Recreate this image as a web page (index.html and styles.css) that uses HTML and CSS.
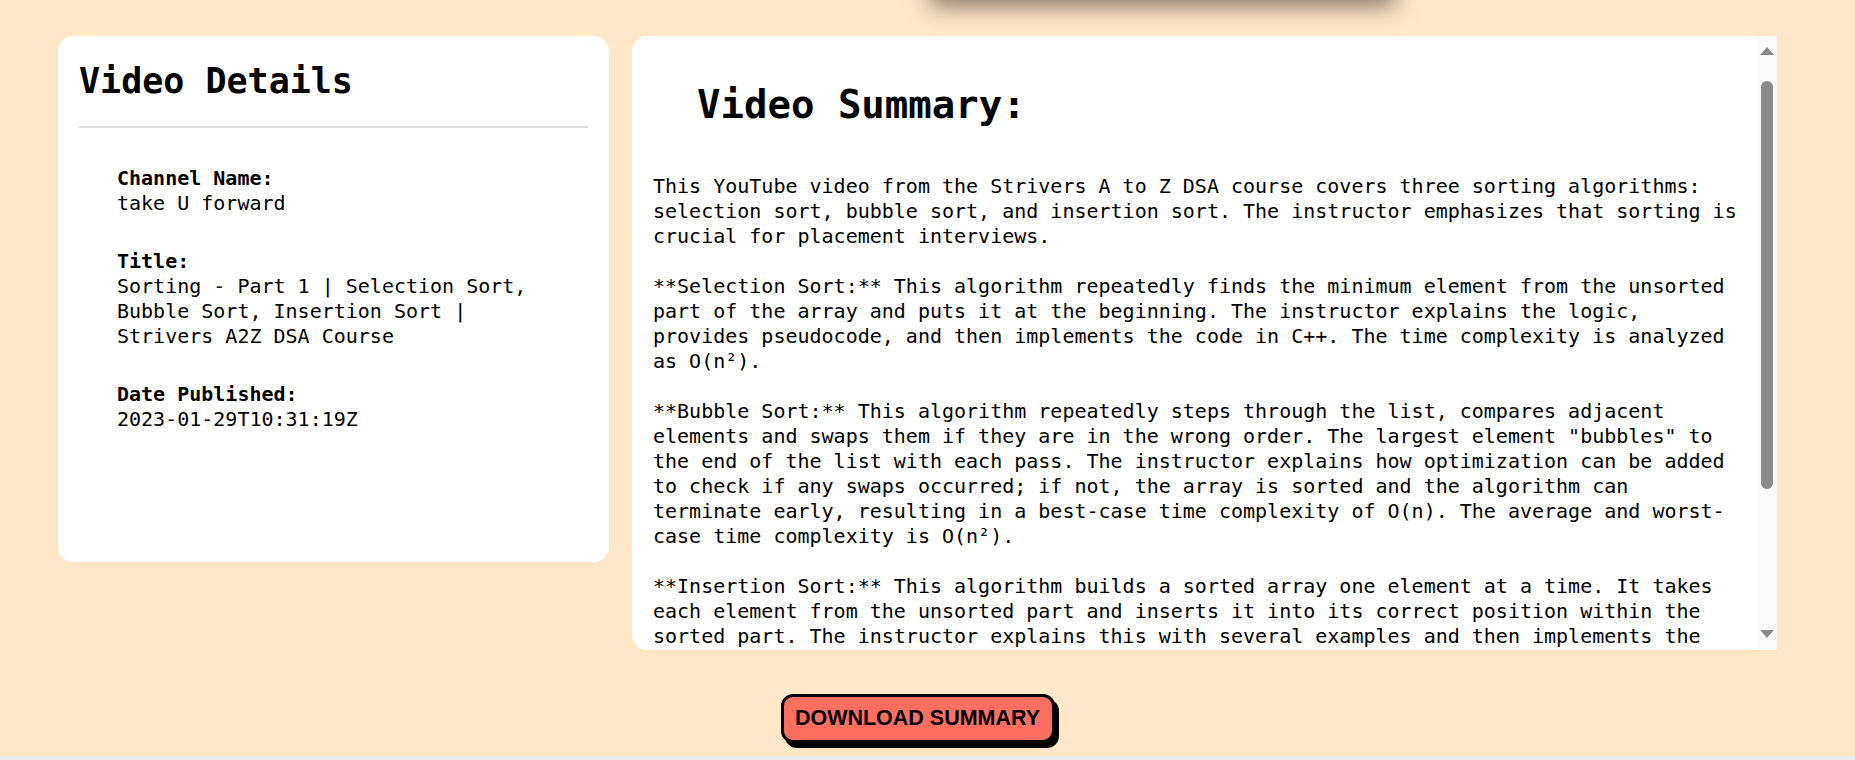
FILE: index.html
```html
<!DOCTYPE html>
<html lang="en">
<head>
<meta charset="utf-8">
<title>Video Summary</title>
<link rel="stylesheet" href="styles.css">
</head>
<body>
<div class="ghost-panel"></div>
<main class="layout">
  <div class="cards">
    <section class="card details-card">
      <h2 class="card-title">Video Details</h2>
      <hr class="divider">
      <div class="details">
        <div class="detail">
          <div class="detail-label">Channel Name:</div>
          <div class="detail-value">take U forward</div>
        </div>
        <div class="detail">
          <div class="detail-label">Title:</div>
          <div class="detail-value">Sorting - Part 1 | Selection Sort, Bubble Sort, Insertion Sort | Strivers A2Z DSA Course</div>
        </div>
        <div class="detail">
          <div class="detail-label">Date Published:</div>
          <div class="detail-value">2023-01-29T10:31:19Z</div>
        </div>
      </div>
    </section>
    <section class="card summary-card">
      <div class="summary-body">
        <h1 class="summary-title">Video Summary:</h1>
        <div class="summary-text">This YouTube video from the Strivers A to Z DSA course covers three sorting algorithms: selection sort, bubble sort, and insertion sort. The instructor emphasizes that sorting is crucial for placement interviews.

**Selection Sort:** This algorithm repeatedly finds the minimum element from the unsorted part of the array and puts it at the beginning. The instructor explains the logic, provides pseudocode, and then implements the code in C++. The time complexity is analyzed as O(n²).

**Bubble Sort:** This algorithm repeatedly steps through the list, compares adjacent elements and swaps them if they are in the wrong order. The largest element "bubbles" to the end of the list with each pass. The instructor explains how optimization can be added to check if any swaps occurred; if not, the array is sorted and the algorithm can terminate early, resulting in a best-case time complexity of O(n). The average and worst-case time complexity is O(n²).

**Insertion Sort:** This algorithm builds a sorted array one element at a time. It takes each element from the unsorted part and inserts it into its correct position within the sorted part. The instructor explains this with several examples and then implements the code in C++. The worst and average case time complexity is O(n²), while the best case is O(n).</div>
      </div>
      <div class="scrollbar" aria-hidden="true">
        <span class="sb-up"></span>
        <span class="sb-thumb"></span>
        <span class="sb-down"></span>
      </div>
    </section>
  </div>
  <div class="actions">
    <button class="download-btn" type="button">DOWNLOAD SUMMARY</button>
  </div>
</main>
<footer class="footer"></footer>
</body>
</html>
```

FILE: styles.css
```css
html, body {
  margin: 0;
  padding: 0;
}

body {
  display: flow-root;
  background: #ffe8c8;
  color: #000;
  font-family: "DejaVu Sans Mono", "Liberation Mono", monospace;
}

.ghost-panel {
  width: 465px;
  height: 60px;
  margin: -60px 0 0 930px;
  background: #ffffff;
  box-shadow: 0 6px 24px rgba(0, 0, 0, 0.5);
}

.layout {
  width: 1719px;
  margin: 36px 0 0 58px;
}

.cards {
  display: flex;
  gap: 23px;
  align-items: flex-start;
}

.card {
  background: #ffffff;
  box-sizing: border-box;
}

.details-card {
  width: 551px;
  height: 526px;
  border-radius: 15px;
  padding: 24px 21px;
}

.card-title {
  margin: 0;
  font-size: 35px;
  line-height: 42px;
  font-weight: bold;
}

.divider {
  margin: 24px 0 0;
  border: 0;
  height: 2px;
  background: #dcdcdc;
}

.details {
  margin-top: 38px;
  padding: 0 30px 0 38px;
}

.detail {
  font-size: 20px;
  line-height: 25px;
}

.detail + .detail {
  margin-top: 33px;
}

.detail-label {
  font-weight: bold;
}

.summary-card {
  flex: 1;
  height: 614px;
  display: flex;
  border-radius: 15px 0 0 15px;
  overflow: hidden;
}

.summary-body {
  flex: 1;
  min-width: 0;
  padding: 0 14px 0 21px;
  overflow: hidden;
}

.summary-title {
  margin: 46px 0 0 44px;
  font-size: 39px;
  line-height: 46px;
  font-weight: bold;
}

.summary-text {
  margin-top: 46px;
  font-size: 20px;
  line-height: 25px;
  white-space: pre-wrap;
}

.scrollbar {
  width: 20px;
  flex: none;
  background: #fafafa;
  display: flex;
  flex-direction: column;
  align-items: center;
}

.sb-up {
  margin-top: 11px;
  width: 0;
  height: 0;
  border-left: 7px solid transparent;
  border-right: 7px solid transparent;
  border-bottom: 8px solid #8b8b8b;
}

.sb-thumb {
  margin-top: 26px;
  width: 12px;
  height: 408px;
  border-radius: 6px;
  background: #8b8b8b;
}

.sb-down {
  margin-top: auto;
  margin-bottom: 12px;
  width: 0;
  height: 0;
  border-left: 7px solid transparent;
  border-right: 7px solid transparent;
  border-top: 8px solid #8b8b8b;
}

.actions {
  display: flex;
  justify-content: center;
  margin-top: 44px;
}

.download-btn {
  width: 274px;
  height: 49px;
  box-sizing: border-box;
  padding: 0;
  border: 3px solid #000;
  border-radius: 12px;
  background: #ff6f61;
  box-shadow: 4px 5px 0 #000;
  color: #000;
  font-family: "Liberation Sans", Arial, sans-serif;
  font-weight: bold;
  font-size: 21.5px;
  cursor: pointer;
}

.footer {
  margin-top: 13px;
  height: 4px;
  background: #ececec;
}
```
